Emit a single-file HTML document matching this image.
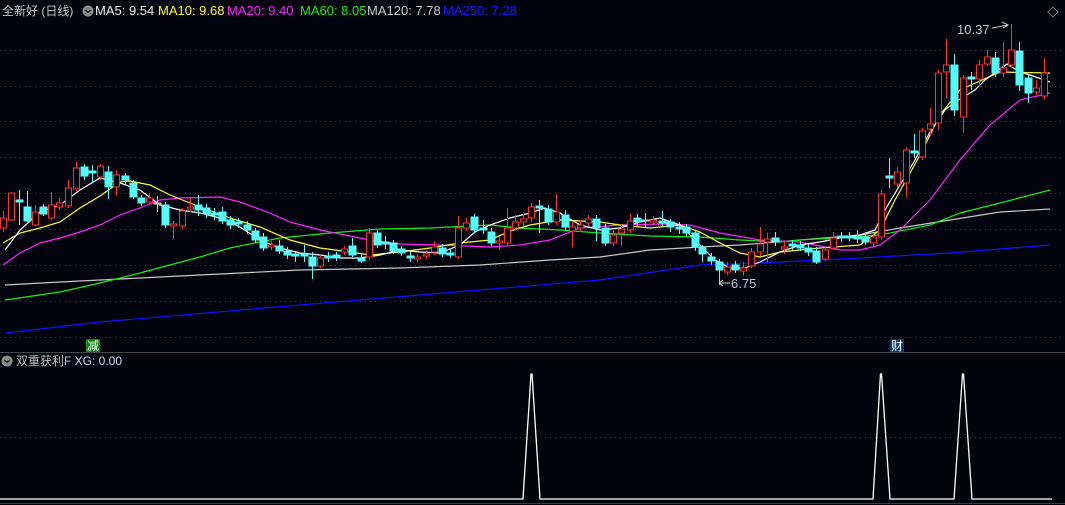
<!DOCTYPE html>
<html><head><meta charset="utf-8"><style>
html,body{margin:0;padding:0;background:#03030e;width:1065px;height:505px;overflow:hidden}
svg{position:absolute;left:0;top:0}
.t{position:absolute;font:13px "Liberation Sans","Noto Sans CJK SC",sans-serif;white-space:nowrap;line-height:15px}
</style></head><body>
<svg width="1065" height="505" viewBox="0 0 1065 505">
<g stroke="#3a3a44" stroke-width="1" stroke-dasharray="1,4">
<line x1="0" y1="50.5" x2="1065" y2="50.5"/><line x1="0" y1="86.5" x2="1065" y2="86.5"/><line x1="0" y1="121.5" x2="1065" y2="121.5"/><line x1="0" y1="157.5" x2="1065" y2="157.5"/><line x1="0" y1="193.5" x2="1065" y2="193.5"/><line x1="0" y1="229.5" x2="1065" y2="229.5"/><line x1="0" y1="265.5" x2="1065" y2="265.5"/><line x1="0" y1="301.5" x2="1065" y2="301.5"/><line x1="0" y1="337.5" x2="1065" y2="337.5"/><line x1="0" y1="437.5" x2="1065" y2="437.5"/>
</g>
<line x1="0" y1="352.5" x2="1065" y2="352.5" stroke="#45454c"/>
<line x1="0" y1="503.5" x2="1065" y2="503.5" stroke="#3a3a40"/>
<g fill="none" stroke-width="1.2">
<polyline stroke="#1010ff" points="5,333 100,322 300,305 480,290 600,280 700,265 780,262 860,258 950,253 1050,245"/>
<polyline stroke="#c8c8c8" points="5,285 60,282 100,280 140,278 200,275 300,270 400,268 480,265 550,260 600,257 650,250 700,247 740,245 800,240 860,235 900,228 950,220 1000,212 1050,209"/>
<polyline stroke="#10f010" points="5,300 60,292 100,283 140,273 170,265 200,257 230,248 280,238 330,233 380,229 430,228 490,225 520,228 560,230 600,233 650,236 700,237 740,240 780,242 800,240 850,237 880,235 930,225 960,213 1000,203 1050,190"/>
<polyline stroke="#ff20ff" points="3,265 20,253 40,243 60,238 80,232 100,225 120,215 140,208 160,200 180,198 220,197 240,202 270,213 290,222 320,230 350,236 370,240 400,244 440,245 490,247 520,245 550,240 580,228 620,225 660,224 690,225 720,233 760,240 800,242 840,250 860,250 880,245 900,230 930,200 960,160 990,125 1020,100 1050,93"/>
<polyline stroke="#ffff20" points="3,243 20,233 40,228 60,222 80,208 100,196 120,182 130,181 150,185 170,195 190,203 230,218 260,227 290,240 320,248 350,252 370,255 400,252 430,248 460,243 490,240 510,231 530,225 560,220 600,222 620,225 650,228 680,225 700,232 720,243 740,253 760,257 780,252 820,248 860,245 880,230 895,200 920,155 940,115 960,90 1000,72 1050,73"/>
<polyline stroke="#ffffff" points="5,250 20,230 40,212 60,205 80,190 100,178 120,183 140,190 160,205 180,210 200,213 220,218 240,227 260,240 280,248 300,253 320,255 340,258 360,258 380,255 400,250 420,252 440,253 460,245 475,232 490,225 510,218 530,213 545,208 560,213 580,225 600,230 620,228 640,222 660,218 680,225 700,245 715,260 730,268 745,268 760,262 780,252 800,245 820,242 840,238 860,235 875,230 885,210 900,185 915,160 930,132 945,110 955,102 965,96 975,90 985,80 1007,64 1020,72 1030,75 1050,82"/>
</g>
<g stroke-width="1" shape-rendering="crispEdges">
<g stroke="#ff3232" fill="#03030e">
<line x1="3.5" y1="211" x2="3.5" y2="232"/><rect x="0.5" y="218" width="6" height="10"/>
<line x1="11.5" y1="192" x2="11.5" y2="221"/><rect x="8.5" y="193" width="6" height="27"/>
<line x1="35.5" y1="205" x2="35.5" y2="226"/><rect x="32.5" y="212" width="6" height="13"/>
<line x1="51.5" y1="192" x2="51.5" y2="220"/><rect x="48.5" y="205" width="6" height="13"/>
<line x1="59.5" y1="198" x2="59.5" y2="210"/><rect x="56.5" y="203" width="6" height="4"/>
<line x1="68.5" y1="180" x2="68.5" y2="208"/><rect x="65.5" y="188" width="6" height="18"/>
<line x1="76.5" y1="162" x2="76.5" y2="191"/><rect x="73.5" y="168" width="6" height="21"/>
<line x1="100.5" y1="164" x2="100.5" y2="180"/><rect x="97.5" y="166" width="6" height="11"/>
<line x1="116.5" y1="170" x2="116.5" y2="195"/><rect x="113.5" y="175" width="6" height="12"/>
<line x1="149.5" y1="193" x2="149.5" y2="205"/><rect x="146.5" y="198" width="6" height="4"/>
<line x1="173.5" y1="221" x2="173.5" y2="239"/><rect x="170.5" y="224" width="6" height="2"/>
<line x1="182.5" y1="208" x2="182.5" y2="229"/><rect x="179.5" y="211" width="6" height="15"/>
<line x1="190.5" y1="198" x2="190.5" y2="212"/><rect x="187.5" y="207" width="6" height="2"/>
<line x1="271.5" y1="241" x2="271.5" y2="250"/><rect x="268.5" y="245" width="6" height="2"/>
<line x1="320.5" y1="255" x2="320.5" y2="268"/><rect x="317.5" y="258" width="6" height="8"/>
<line x1="344.5" y1="246" x2="344.5" y2="255"/><rect x="341.5" y="249" width="6" height="3"/>
<line x1="369.5" y1="228" x2="369.5" y2="260"/><rect x="366.5" y="233" width="6" height="24"/>
<line x1="417.5" y1="254" x2="417.5" y2="262"/><rect x="414.5" y="257" width="6" height="2"/>
<line x1="426.5" y1="250" x2="426.5" y2="259"/><rect x="423.5" y="254" width="6" height="2"/>
<line x1="434.5" y1="241" x2="434.5" y2="255"/><rect x="431.5" y="247" width="6" height="5"/>
<line x1="458.5" y1="216" x2="458.5" y2="259"/><rect x="455.5" y="228" width="6" height="29"/>
<line x1="466.5" y1="218" x2="466.5" y2="231"/><rect x="463.5" y="223" width="6" height="5"/>
<line x1="499.5" y1="236" x2="499.5" y2="250"/><rect x="496.5" y="241" width="6" height="2"/>
<line x1="507.5" y1="208" x2="507.5" y2="245"/><rect x="504.5" y="228" width="6" height="15"/>
<line x1="515.5" y1="215" x2="515.5" y2="231"/><rect x="512.5" y="222" width="6" height="6"/>
<line x1="523.5" y1="214" x2="523.5" y2="227"/><rect x="520.5" y="219" width="6" height="3"/>
<line x1="531.5" y1="203" x2="531.5" y2="222"/><rect x="528.5" y="207" width="6" height="11"/>
<line x1="556.5" y1="194" x2="556.5" y2="225"/><rect x="553.5" y="212" width="6" height="10"/>
<line x1="572.5" y1="222" x2="572.5" y2="247"/><rect x="569.5" y="227" width="6" height="4"/>
<line x1="580.5" y1="220" x2="580.5" y2="232"/><rect x="577.5" y="225" width="6" height="3"/>
<line x1="588.5" y1="215" x2="588.5" y2="226"/><rect x="585.5" y="219" width="6" height="4"/>
<line x1="613.5" y1="230" x2="613.5" y2="246"/><rect x="610.5" y="235" width="6" height="8"/>
<line x1="621.5" y1="225" x2="621.5" y2="246"/><rect x="618.5" y="229" width="6" height="4"/>
<line x1="630.5" y1="214" x2="630.5" y2="233"/><rect x="627.5" y="221" width="6" height="9"/>
<line x1="653.5" y1="216" x2="653.5" y2="225"/><rect x="650.5" y="220" width="6" height="2"/>
<line x1="727.5" y1="262" x2="727.5" y2="275"/><rect x="724.5" y="267" width="6" height="5"/>
<line x1="743.5" y1="262" x2="743.5" y2="276"/><rect x="740.5" y="268" width="6" height="3"/>
<line x1="751.5" y1="248" x2="751.5" y2="268"/><rect x="748.5" y="252" width="6" height="14"/>
<line x1="760.5" y1="227" x2="760.5" y2="256"/><rect x="757.5" y="244" width="6" height="8"/>
<line x1="767.5" y1="233" x2="767.5" y2="263"/><rect x="764.5" y="239" width="6" height="3"/>
<line x1="784.5" y1="242" x2="784.5" y2="254"/><rect x="781.5" y="247" width="6" height="2"/>
<line x1="825.5" y1="246" x2="825.5" y2="261"/><rect x="822.5" y="250" width="6" height="9"/>
<line x1="833.5" y1="232" x2="833.5" y2="250"/><rect x="830.5" y="238" width="6" height="10"/>
<line x1="873.5" y1="233" x2="873.5" y2="246"/><rect x="870.5" y="237" width="6" height="6"/>
<line x1="881.5" y1="190" x2="881.5" y2="240"/><rect x="878.5" y="194" width="6" height="43"/>
<line x1="897.5" y1="167" x2="897.5" y2="188"/><rect x="894.5" y="172" width="6" height="12"/>
<line x1="906.5" y1="147" x2="906.5" y2="197"/><rect x="903.5" y="150" width="6" height="33"/>
<line x1="922.5" y1="128" x2="922.5" y2="160"/><rect x="919.5" y="131" width="6" height="26"/>
<line x1="930.5" y1="108" x2="930.5" y2="136"/><rect x="927.5" y="124" width="6" height="5"/>
<line x1="938.5" y1="70" x2="938.5" y2="130"/><rect x="935.5" y="73" width="6" height="50"/>
<line x1="946.5" y1="39" x2="946.5" y2="98"/><rect x="943.5" y="65" width="6" height="7"/>
<line x1="963.5" y1="75" x2="963.5" y2="133"/><rect x="960.5" y="78" width="6" height="39"/>
<line x1="979.5" y1="60" x2="979.5" y2="87"/><rect x="976.5" y="65" width="6" height="14"/>
<line x1="987.5" y1="50" x2="987.5" y2="66"/><rect x="984.5" y="57" width="6" height="7"/>
<line x1="1003.5" y1="42" x2="1003.5" y2="77"/><rect x="1000.5" y="68" width="6" height="5"/>
<line x1="1011.5" y1="24" x2="1011.5" y2="67"/><rect x="1008.5" y="50" width="6" height="15"/>
<line x1="1036.5" y1="80" x2="1036.5" y2="95"/><rect x="1033.5" y="88" width="6" height="4"/>
<line x1="1044.5" y1="58" x2="1044.5" y2="99"/><rect x="1041.5" y="73" width="6" height="23"/>
</g>
<g stroke="#54fcfc" fill="#54fcfc">
<line x1="19.5" y1="190" x2="19.5" y2="225"/><rect x="16" y="200" width="7" height="2"/>
<line x1="27.5" y1="191" x2="27.5" y2="222"/><rect x="24" y="207" width="7" height="14"/>
<line x1="43.5" y1="204" x2="43.5" y2="216"/><rect x="40" y="207" width="7" height="7"/>
<line x1="84.5" y1="164" x2="84.5" y2="180"/><rect x="81" y="167" width="7" height="9"/>
<line x1="92.5" y1="165" x2="92.5" y2="183"/><rect x="89" y="171" width="7" height="2"/>
<line x1="108.5" y1="166" x2="108.5" y2="199"/><rect x="105" y="172" width="7" height="15"/>
<line x1="125.5" y1="173" x2="125.5" y2="184"/><rect x="122" y="176" width="7" height="4"/>
<line x1="133.5" y1="180" x2="133.5" y2="199"/><rect x="130" y="183" width="7" height="14"/>
<line x1="141.5" y1="195" x2="141.5" y2="206"/><rect x="138" y="198" width="7" height="5"/>
<line x1="165.5" y1="202" x2="165.5" y2="228"/><rect x="162" y="205" width="7" height="20"/>
<line x1="198.5" y1="195" x2="198.5" y2="216"/><rect x="195" y="205" width="7" height="5"/>
<line x1="206.5" y1="204" x2="206.5" y2="218"/><rect x="203" y="208" width="7" height="6"/>
<line x1="214.5" y1="208" x2="214.5" y2="220"/><rect x="211" y="213" width="7" height="2"/>
<line x1="222.5" y1="207" x2="222.5" y2="224"/><rect x="219" y="212" width="7" height="9"/>
<line x1="230.5" y1="216" x2="230.5" y2="229"/><rect x="227" y="220" width="7" height="5"/>
<line x1="238.5" y1="218" x2="238.5" y2="228"/><rect x="235" y="222" width="7" height="2"/>
<line x1="247.5" y1="221" x2="247.5" y2="234"/><rect x="244" y="225" width="7" height="5"/>
<line x1="255.5" y1="228" x2="255.5" y2="243"/><rect x="252" y="231" width="7" height="9"/>
<line x1="263.5" y1="233" x2="263.5" y2="251"/><rect x="260" y="237" width="7" height="11"/>
<line x1="279.5" y1="240" x2="279.5" y2="254"/><rect x="276" y="246" width="7" height="5"/>
<line x1="287.5" y1="247" x2="287.5" y2="259"/><rect x="284" y="251" width="7" height="4"/>
<line x1="295.5" y1="252" x2="295.5" y2="262"/><rect x="292" y="254" width="7" height="2"/>
<line x1="304.5" y1="245" x2="304.5" y2="262"/><rect x="301" y="254" width="7" height="2"/>
<line x1="312.5" y1="252" x2="312.5" y2="279"/><rect x="309" y="257" width="7" height="9"/>
<line x1="328.5" y1="252" x2="328.5" y2="262"/><rect x="325" y="256" width="7" height="2"/>
<line x1="336.5" y1="252" x2="336.5" y2="261"/><rect x="333" y="255" width="7" height="3"/>
<line x1="352.5" y1="238" x2="352.5" y2="257"/><rect x="349" y="246" width="7" height="9"/>
<line x1="361.5" y1="254" x2="361.5" y2="263"/><rect x="358" y="258" width="7" height="3"/>
<line x1="377.5" y1="230" x2="377.5" y2="248"/><rect x="374" y="233" width="7" height="12"/>
<line x1="385.5" y1="236" x2="385.5" y2="249"/><rect x="382" y="242" width="7" height="2"/>
<line x1="393.5" y1="240" x2="393.5" y2="254"/><rect x="390" y="243" width="7" height="8"/>
<line x1="401.5" y1="246" x2="401.5" y2="256"/><rect x="398" y="249" width="7" height="4"/>
<line x1="410.5" y1="251" x2="410.5" y2="262"/><rect x="407" y="256" width="7" height="2"/>
<line x1="442.5" y1="244" x2="442.5" y2="257"/><rect x="439" y="248" width="7" height="6"/>
<line x1="450.5" y1="248" x2="450.5" y2="258"/><rect x="447" y="253" width="7" height="2"/>
<line x1="474.5" y1="214" x2="474.5" y2="233"/><rect x="471" y="217" width="7" height="13"/>
<line x1="483.5" y1="220" x2="483.5" y2="234"/><rect x="480" y="228" width="7" height="2"/>
<line x1="491.5" y1="228" x2="491.5" y2="246"/><rect x="488" y="232" width="7" height="11"/>
<line x1="539.5" y1="200" x2="539.5" y2="233"/><rect x="536" y="206" width="7" height="2"/>
<line x1="548.5" y1="205" x2="548.5" y2="225"/><rect x="545" y="209" width="7" height="13"/>
<line x1="565.5" y1="210" x2="565.5" y2="231"/><rect x="562" y="215" width="7" height="12"/>
<line x1="596.5" y1="215" x2="596.5" y2="241"/><rect x="593" y="219" width="7" height="9"/>
<line x1="605.5" y1="224" x2="605.5" y2="246"/><rect x="602" y="228" width="7" height="15"/>
<line x1="637.5" y1="214" x2="637.5" y2="226"/><rect x="634" y="218" width="7" height="4"/>
<line x1="662.5" y1="211" x2="662.5" y2="227"/><rect x="659" y="221" width="7" height="2"/>
<line x1="670.5" y1="219" x2="670.5" y2="232"/><rect x="667" y="222" width="7" height="5"/>
<line x1="679.5" y1="222" x2="679.5" y2="234"/><rect x="676" y="227" width="7" height="2"/>
<line x1="686.5" y1="224" x2="686.5" y2="236"/><rect x="683" y="227" width="7" height="6"/>
<line x1="695.5" y1="230" x2="695.5" y2="251"/><rect x="692" y="233" width="7" height="14"/>
<line x1="702.5" y1="245" x2="702.5" y2="262"/><rect x="699" y="248" width="7" height="6"/>
<line x1="711.5" y1="253" x2="711.5" y2="265"/><rect x="708" y="257" width="7" height="4"/>
<line x1="719.5" y1="259" x2="719.5" y2="285"/><rect x="716" y="262" width="7" height="8"/>
<line x1="735.5" y1="261" x2="735.5" y2="273"/><rect x="732" y="265" width="7" height="5"/>
<line x1="775.5" y1="232" x2="775.5" y2="246"/><rect x="772" y="238" width="7" height="4"/>
<line x1="792.5" y1="240" x2="792.5" y2="250"/><rect x="789" y="244" width="7" height="2"/>
<line x1="800.5" y1="241" x2="800.5" y2="251"/><rect x="797" y="245" width="7" height="3"/>
<line x1="808.5" y1="244" x2="808.5" y2="256"/><rect x="805" y="248" width="7" height="4"/>
<line x1="816.5" y1="247" x2="816.5" y2="264"/><rect x="813" y="251" width="7" height="11"/>
<line x1="841.5" y1="232" x2="841.5" y2="242"/><rect x="838" y="236" width="7" height="2"/>
<line x1="849.5" y1="232" x2="849.5" y2="241"/><rect x="846" y="236" width="7" height="2"/>
<line x1="857.5" y1="230" x2="857.5" y2="243"/><rect x="854" y="237" width="7" height="2"/>
<line x1="865.5" y1="233" x2="865.5" y2="245"/><rect x="862" y="237" width="7" height="5"/>
<line x1="889.5" y1="158" x2="889.5" y2="188"/><rect x="886" y="176" width="7" height="2"/>
<line x1="914.5" y1="134" x2="914.5" y2="158"/><rect x="911" y="151" width="7" height="2"/>
<line x1="954.5" y1="54" x2="954.5" y2="116"/><rect x="951" y="65" width="7" height="45"/>
<line x1="971.5" y1="72" x2="971.5" y2="90"/><rect x="968" y="77" width="7" height="2"/>
<line x1="995.5" y1="52" x2="995.5" y2="77"/><rect x="992" y="58" width="7" height="15"/>
<line x1="1019.5" y1="42" x2="1019.5" y2="91"/><rect x="1016" y="51" width="7" height="34"/>
<line x1="1028.5" y1="75" x2="1028.5" y2="103"/><rect x="1025" y="78" width="7" height="15"/>
</g>
<g stroke="#c8c8c8" fill="#c8c8c8">
<line x1="157.5" y1="196" x2="157.5" y2="212"/><rect x="154" y="203" width="7" height="1"/>
<line x1="645.5" y1="213" x2="645.5" y2="228"/><rect x="642" y="220" width="7" height="1"/>
</g>
</g>
<g stroke="#c8c8c8" fill="none" stroke-width="1">
<path d="M992,28 L1008,25 M1002,22 L1008,25 L1003,28"/>
<path d="M719,283 L730,283 M719,283 L723,280 M719,283 L723,286"/>
</g>
<text x="957" y="34" fill="#c0c8d8" font-family="Liberation Sans" font-size="13">10.37</text>
<text x="731" y="288" fill="#c0c8d8" font-family="Liberation Sans" font-size="13">6.75</text>
<path d="M1053,7 L1058,12 L1053,17 L1048,12 Z" fill="none" stroke="#777"/>
<rect x="86" y="339" width="14" height="13" fill="#0a8a0a"/>
<text x="87" y="350" fill="#fff" font-family="Noto Sans CJK SC" font-size="12">减</text>
<rect x="890" y="339" width="14" height="13" fill="#0a3a78"/>
<text x="891" y="350" fill="#fff" font-family="Noto Sans CJK SC" font-size="12">财</text>
<polyline fill="none" stroke="#ffffff" stroke-width="1.3" points="0,499 523,499 531,374 532,374 540,499 873,499 880.5,374 881.5,374 890,499 954,499 962.5,374 963.5,374 972,499 1052,499"/>
<circle cx="88" cy="11" r="5.5" fill="#8a8a8a"/>
<path d="M85.5,10 L88,12.5 L90.5,10" stroke="#222" fill="none" stroke-width="1.3"/>
<circle cx="7" cy="361" r="5.5" fill="#8a8a8a"/>
<path d="M4.5,360 L7,362.5 L9.5,360" stroke="#222" fill="none" stroke-width="1.3"/>
</svg>
<div class="t" style="left:2px;top:4px;color:#c8c8c8;font-size:12px">全新好 (日线)</div>
<div class="t" style="left:95px;top:3px;color:#f0f0f0">MA5: 9.54</div>
<div class="t" style="left:158px;top:3px;color:#ffff20">MA10: 9.68</div>
<div class="t" style="left:227px;top:3px;color:#ff20ff">MA20: 9.40</div>
<div class="t" style="left:300px;top:3px;color:#10f010">MA60: 8.05</div>
<div class="t" style="left:367px;top:3px;color:#c8c8c8">MA120: 7.78</div>
<div class="t" style="left:443px;top:3px;color:#1818ff">MA250: 7.28</div>
<div class="t" style="left:16px;top:354px;color:#c0c0c8;font-size:12px">双重获利F <span style="color:#d8d8f0">XG: 0.00</span></div>
</body></html>
